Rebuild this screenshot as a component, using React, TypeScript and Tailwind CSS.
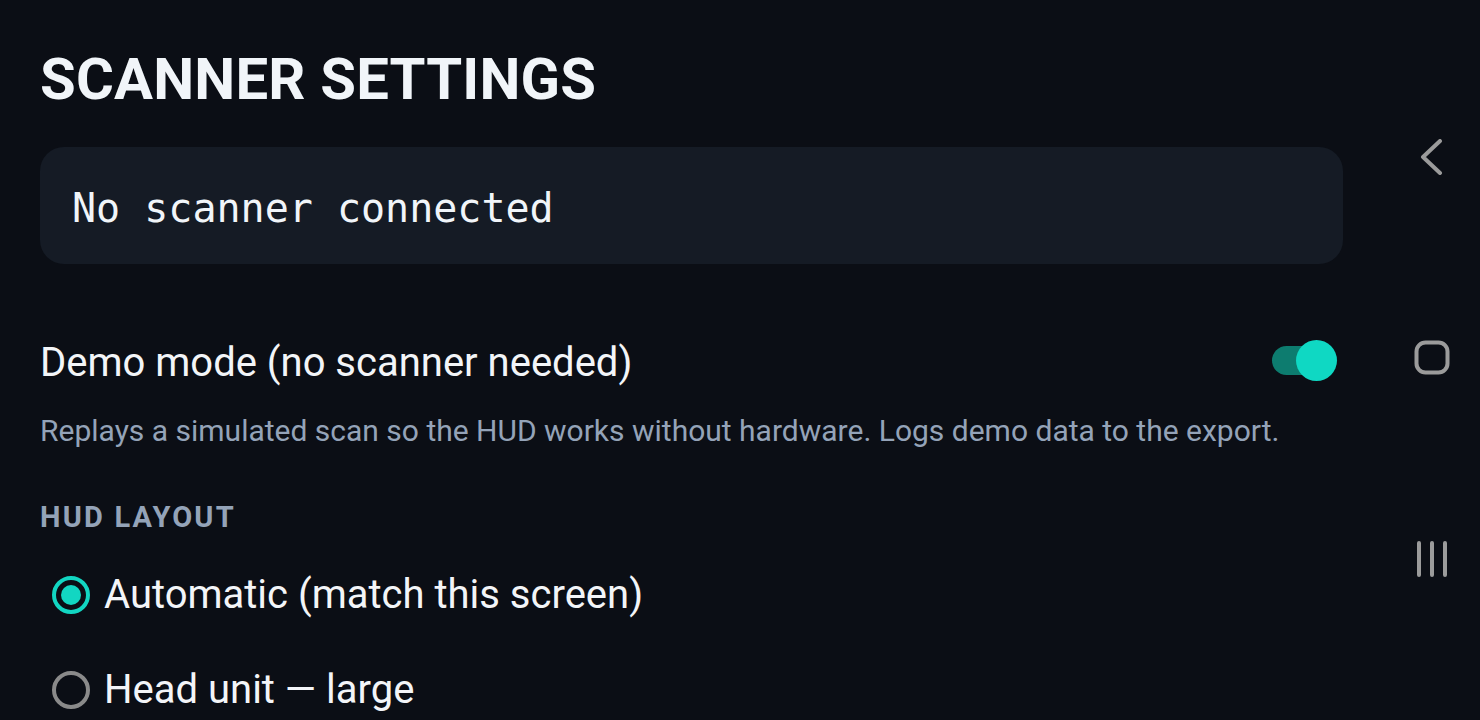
import React from "react";

const roboto = { fontFamily: "Roboto, 'Noto Sans', sans-serif" };

function Radio({ checked, label }: { checked: boolean; label: string }) {
  return (
    <div className="flex h-[48px] items-center">
      <div className="ml-[12px] flex h-[38px] w-[38px] items-center justify-center">
        {checked ? (
          <div className="flex h-[38px] w-[38px] items-center justify-center rounded-full border-[4px] border-[#12d6c2]">
            <div className="h-[20px] w-[20px] rounded-full bg-[#12d6c2]" />
          </div>
        ) : (
          <div className="h-[38px] w-[38px] rounded-full border-[4px] border-[#8a8a8a]" />
        )}
      </div>
      <span className="ml-[14px] text-[40px] leading-[40px] text-[#f3f5f8]">{label}</span>
    </div>
  );
}

export default function App() {
  return (
    <div className="flex h-[720px] w-[1480px] overflow-hidden bg-[#0b0e15]" style={roboto}>
      <main className="flex min-w-0 flex-1 flex-col pl-[40px] pr-[40px] pt-[50px]">
        <h1 className="text-[58px] font-bold leading-[58px] tracking-[0.2px] text-[#f1f5f9]">
          SCANNER SETTINGS
        </h1>
        <div className="mt-[39px] flex h-[117px] items-center rounded-[24px] bg-[#151b25] pl-[32px] pt-[4px]">
          <span
            className="text-[40px] leading-[40px] text-[#f1f5f9]"
            style={{ fontFamily: "'DejaVu Sans Mono', 'Liberation Mono', monospace" }}
          >
            No scanner connected
          </span>
        </div>
        <div className="mt-[76px] flex h-[41px] items-center justify-between">
          <span className="pt-[4px] text-[40px] leading-[40px] text-[#f3f5f8]">Demo mode (no scanner needed)</span>
          <div className="relative mr-[6px] h-[41px] w-[65px]">
            <div className="absolute left-0 top-[6px] h-[29px] w-[62px] rounded-full bg-[#0d7c6f]" />
            <div className="absolute right-0 top-0 h-[41px] w-[41px] rounded-full bg-[#0fd8c3]" />
          </div>
        </div>
        <p className="mt-[35px] text-[30px] leading-[30px] text-[#94a3b8]">
          Replays a simulated scan so the HUD works without hardware. Logs demo data to the export.
        </p>
        <h2 className="mt-[57px] text-[29px] font-bold leading-[29px] tracking-[2.2px] text-[#94a3b8]">
          HUD LAYOUT
        </h2>
        <div className="mt-[39px] flex flex-col gap-[47px]">
          <Radio checked label="Automatic (match this screen)" />
          <Radio checked={false} label="Head unit — large" />
        </div>
      </main>
      <nav className="flex w-[97px] shrink-0 flex-col items-center justify-center gap-[165px] pb-[4px]">
        <svg width="36" height="36" viewBox="0 0 36 36" fill="none">
          <path d="M26 2 L9 18 L26 34" stroke="#9b9b9b" strokeWidth="4" strokeLinecap="round" strokeLinejoin="round" />
        </svg>
        <svg width="36" height="36" viewBox="0 0 36 36" fill="none">
          <rect x="2.5" y="2.5" width="31" height="30" rx="9" stroke="#9b9b9b" strokeWidth="4" />
        </svg>
        <svg width="36" height="36" viewBox="0 0 36 36" fill="none">
          <path d="M5 2 V34 M18 2 V34 M31 2 V34" stroke="#9b9b9b" strokeWidth="4" strokeLinecap="round" />
        </svg>
      </nav>
    </div>
  );
}
